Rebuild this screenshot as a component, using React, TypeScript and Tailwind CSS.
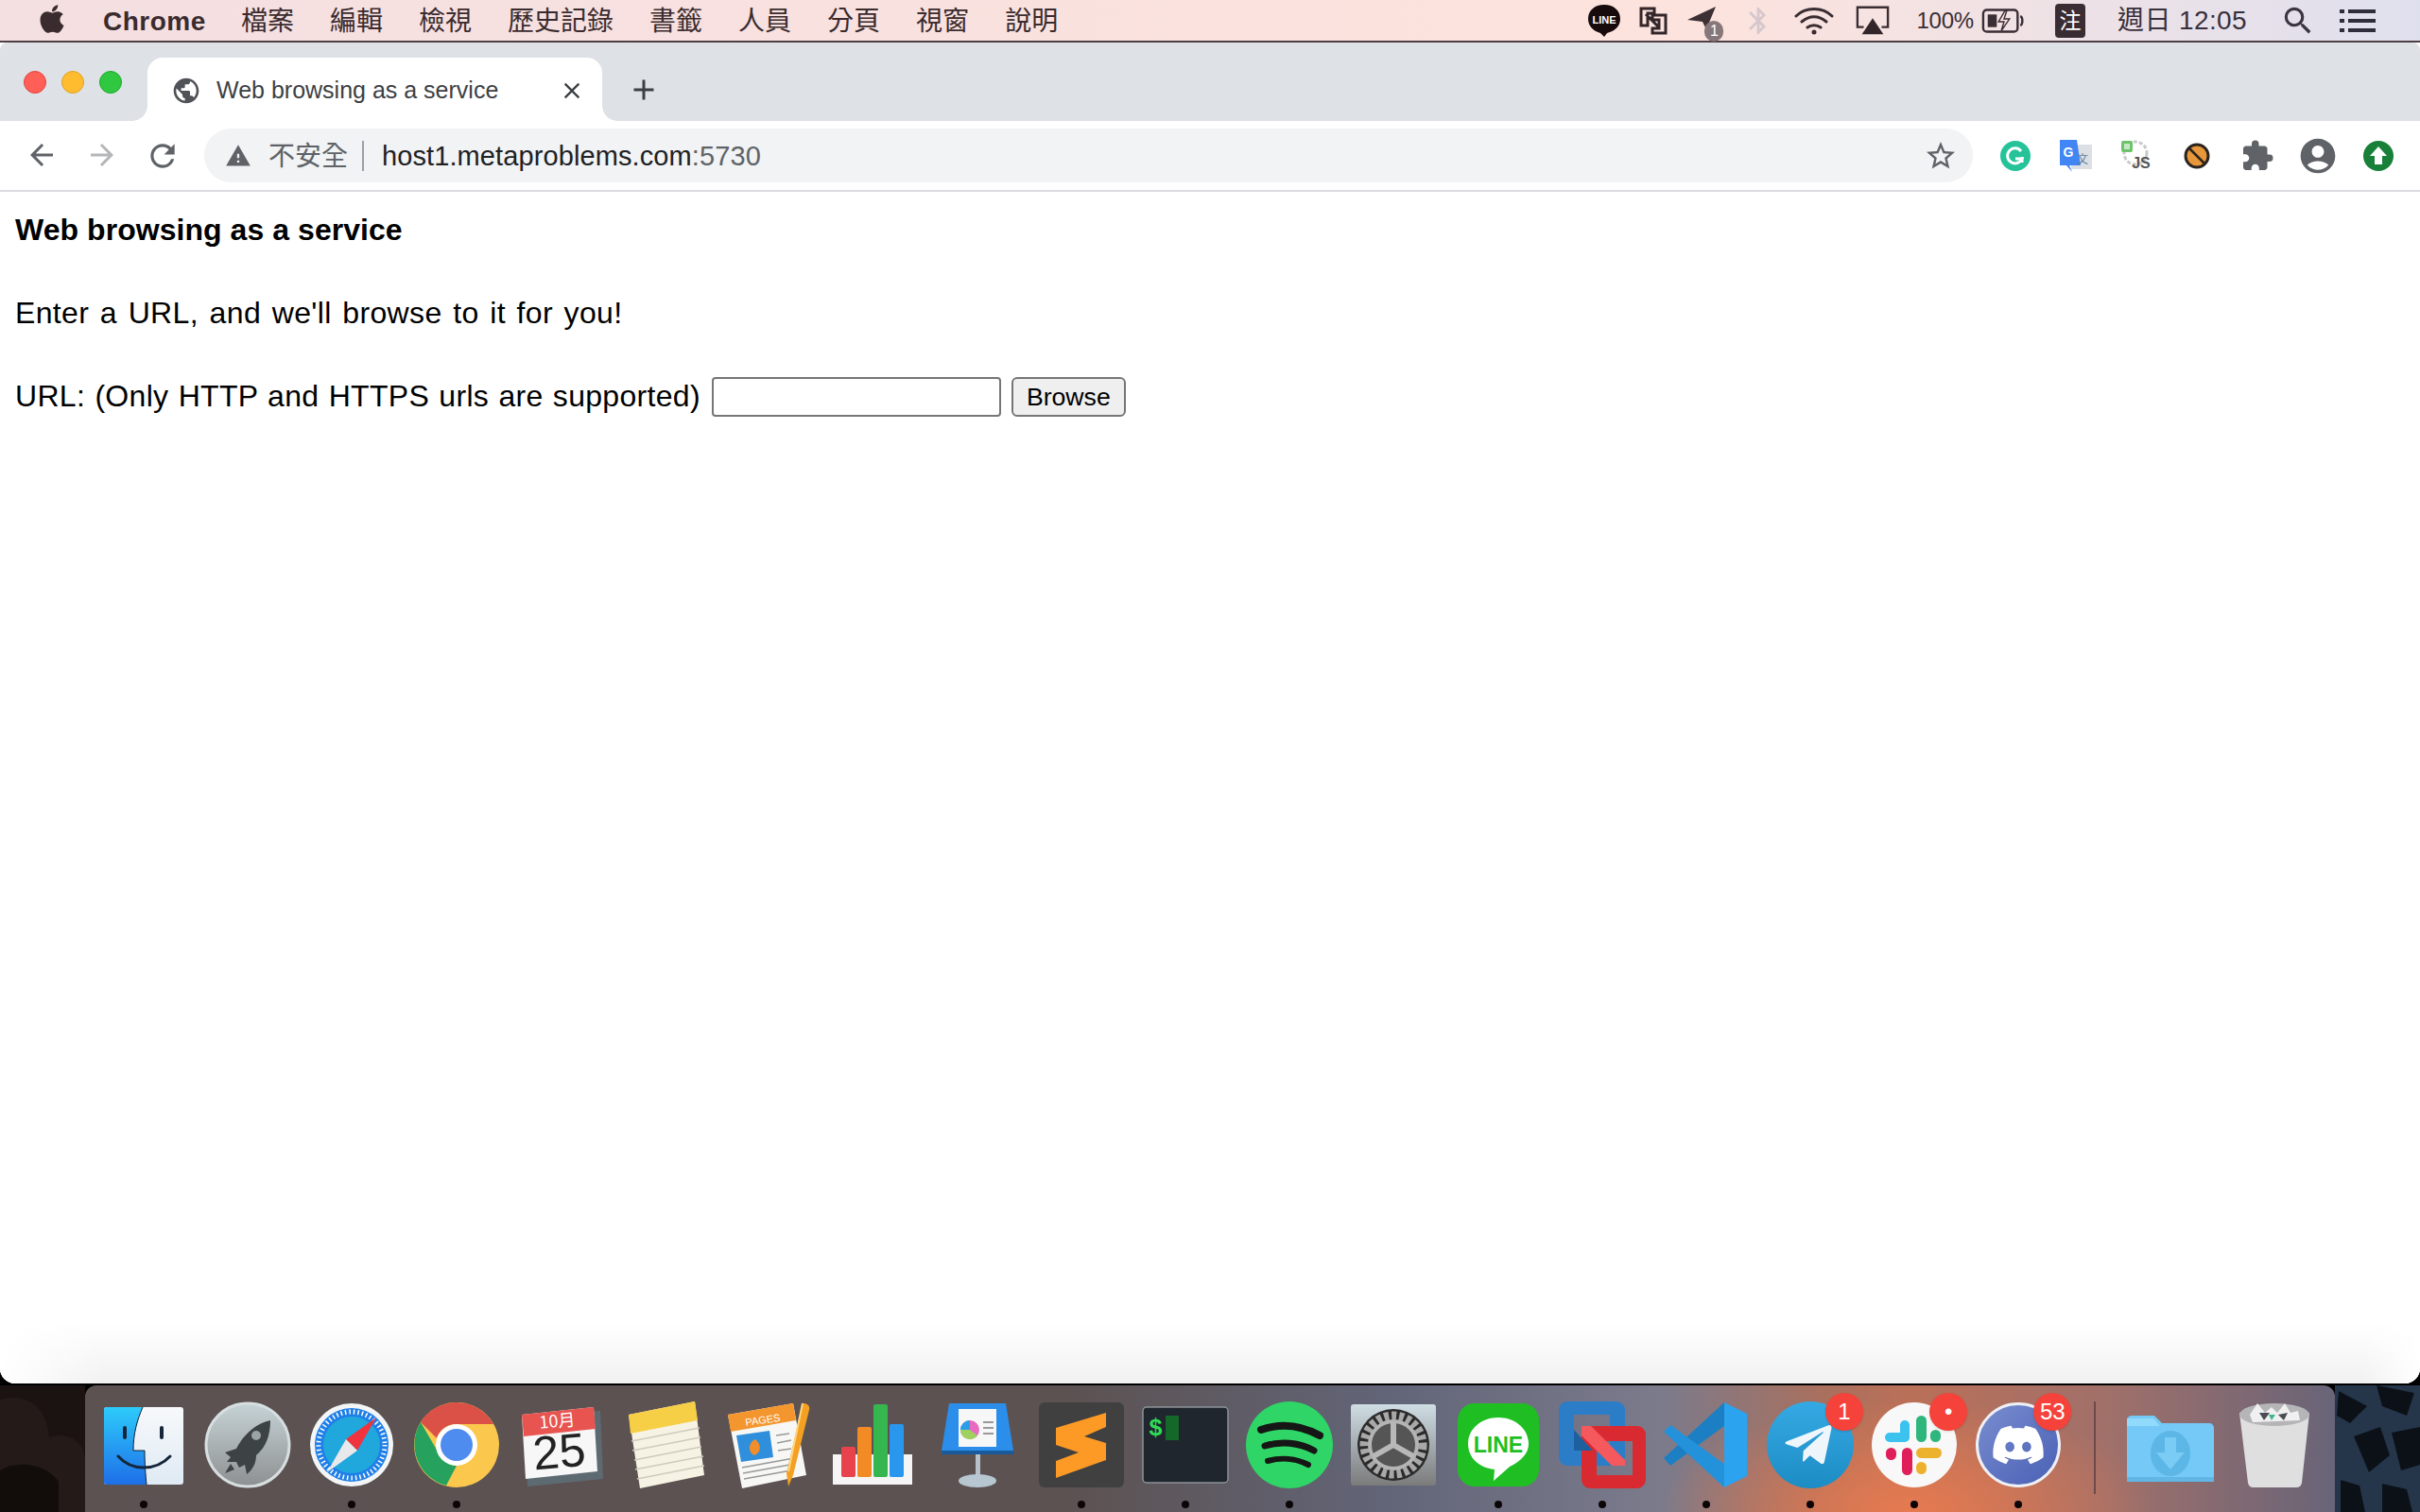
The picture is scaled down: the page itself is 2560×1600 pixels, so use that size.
import React from "react";
import { FaApple, FaDiscord, FaTelegramPlane } from "react-icons/fa";
import { MdAdd, MdArrowBack, MdArrowForward, MdAccountCircle, MdBluetooth, MdClose, MdExtension, MdPublic, MdRefresh, MdStarBorder, MdWarning, MdSearch } from "react-icons/md";

const ui = "font-['Liberation_Sans','Noto_Sans_CJK_TC',sans-serif]";

const menus = ["檔案", "編輯", "檢視", "歷史記錄", "書籤", "人員", "分頁", "視窗", "說明"];

function MenuBar() {
  return (
    <div className={`${ui} h-[45px] shrink-0 flex items-center border-b-2 border-[#4d3f44] bg-gradient-to-r from-[#f4dfe1] via-[#fde3dd] via-70% to-[#dfe0ee] text-[#3a2b2e]`}>
      <FaApple className="ml-[39px] mb-[3px] w-[32px] h-[34px]" />
      <span className="ml-[38px] pt-[2px] text-[28px] font-bold w-[146px] tracking-[0.5px]">Chrome</span>
      <div className="flex gap-[38px] pt-[2px] text-[28px] leading-none">
        {menus.map((m) => (
          <span key={m}>{m}</span>
        ))}
      </div>
      <div className="ml-auto flex items-center pt-[1px]">
        <svg viewBox="0 0 36 36" className="w-[36px] h-[36px] mr-[19px]"><path d="M18 1C8 1 1 7 1 16c0 8 6 13 13 15l4 4 3-4c8-2 14-7 14-15C35 7 28 1 18 1z" fill="#170b0e" /><text x="18" y="21" textAnchor="middle" fontSize="11" fontWeight="700" fill="#fff" fontFamily="Liberation Sans">LINE</text></svg>
        <svg viewBox="0 0 30 30" className="w-[30px] h-[30px] mr-[19px]" fill="none" stroke="#33262a" strokeWidth="3"><path d="M2 2h14v5h-7v13H2zM14 9h14v19H14v-5h7V14h-7zM7 8l14 14" /></svg>
        <div className="relative w-[40px] h-[34px] mr-[20px]">
          <svg viewBox="0 0 34 30" className="w-[34px] h-[30px]"><path d="M2 16L32 2 22 26 18 18z" fill="#3d3034" /></svg>
          <span className="absolute right-0 bottom-[-5px] w-[20px] h-[22px] rounded-full bg-[#85777a] text-white text-[16px] leading-[22px] text-center">1</span>
        </div>
        <MdBluetooth className="w-[34px] h-[36px] text-[#d5c8cc] mr-[21px]" />
        <svg viewBox="0 0 42 32" className="w-[42px] h-[32px] mr-[23px]" fill="none" stroke="#3a2d32" strokeWidth="3" strokeLinecap="round"><path d="M2 11C12 1 30 1 40 11M8 17c8-7 18-7 26 0M14 23c4-3 10-3 14 0" /><circle cx="21" cy="28" r="2.5" fill="#3a2d32" stroke="none" /></svg>
        <svg viewBox="0 0 38 34" className="w-[36px] h-[34px] mr-[28px]" fill="none"><path d="M9 24H2V2h34v22h-7" stroke="#3a2d32" strokeWidth="2.5" /><path d="M19 14l12 18H7z" fill="#33262a" /></svg>
        <span className="text-[24px] mr-[8px] text-[#3a2e35] tracking-[-0.2px]">100%</span>
        <svg viewBox="0 0 48 28" className="w-[46px] h-[28px] mr-[32px]" fill="none" stroke="#3a2e35" strokeWidth="2.5"><rect x="2" y="2" width="38" height="24" rx="4" /><path d="M43 9c3 1 3 9 0 10" /><path d="M7 7h10v14H7z" fill="#3a2e35" stroke="none" /><path d="M26 3l-7 12h6l-3 10 9-13h-6l3-9z" fill="#f8e0e0" stroke="#3a2e35" strokeWidth="1.5" /></svg>
        <span className="w-[32px] h-[36px] rounded-[4px] bg-[#3a2c33] text-white text-[23px] leading-[36px] text-center mr-[34px]">注</span>
        <span className="text-[28px] w-[136px] mr-[36px] text-[#38303c] whitespace-nowrap tracking-[0.4px]">週日 12:05</span>
        <MdSearch className="w-[38px] h-[38px] text-[#3a3440] mr-[25px]" />
        <svg viewBox="0 0 38 24" className="w-[38px] h-[24px] mr-[47px]" fill="#2f2c3c"><rect x="0" y="0" width="5" height="4" /><rect x="9" y="0" width="29" height="4" /><rect x="0" y="10" width="5" height="4" /><rect x="9" y="10" width="29" height="4" /><rect x="0" y="20" width="5" height="4" /><rect x="9" y="20" width="29" height="4" /></svg>
      </div>
    </div>
  );
}

function TabStrip() {
  return (
    <div className={`${ui} h-[83px] shrink-0 flex items-end bg-[#dee1e6] rounded-t-[8px]`}>
      <div className="self-center flex gap-[16px] ml-[25px] mr-[27px] mt-0">
        <span className="w-[24px] h-[24px] rounded-full bg-[#ff5f57] border border-[#e0443e]" />
        <span className="w-[24px] h-[24px] rounded-full bg-[#febc2e] border border-[#dea123]" />
        <span className="w-[24px] h-[24px] rounded-full bg-[#2fc840] border border-[#1aab29]" />
      </div>
      <div className="relative w-[481px] h-[67px] bg-white rounded-t-[16px] flex items-center pt-[2px]">
        <span className="absolute left-[-16px] bottom-0 w-[16px] h-[16px] bg-[radial-gradient(circle_at_0_0,transparent_15.5px,white_16px)]" />
        <span className="absolute right-[-16px] bottom-0 w-[16px] h-[16px] bg-[radial-gradient(circle_at_100%_0,transparent_15.5px,white_16px)]" />
        <MdPublic className="ml-[25px] w-[32px] h-[32px] text-[#4f5257]" />
        <span className="ml-[16px] text-[25px] text-[#3c4043] whitespace-nowrap">Web browsing as a service</span>
        <MdClose className="ml-auto mr-[18px] w-[28px] h-[28px] text-[#3c4043]" />
      </div>
      <MdAdd className="self-end mb-[15px] ml-[26px] w-[36px] h-[36px] text-[#3c4043]" />
    </div>
  );
}

function Ext({ children }: { children: React.ReactNode }) {
  return <div className="w-[64px] flex justify-center items-center">{children}</div>;
}

function Toolbar() {
  return (
    <div className={`${ui} h-[75px] shrink-0 flex items-center bg-white border-b-2 border-[#dadce0]`}>
      <div className="flex w-[216px] pl-[12px] text-[#5f6368]">
        <div className="w-[64px] flex justify-center"><MdArrowBack className="w-[36px] h-[36px]" /></div>
        <div className="w-[64px] flex justify-center"><MdArrowForward className="w-[36px] h-[36px] text-[#b4b6b9]" /></div>
        <div className="w-[64px] flex justify-center"><MdRefresh className="w-[38px] h-[38px]" /></div>
      </div>
      <div className="w-[1871px] h-[57px] rounded-full bg-[#f1f3f4] flex items-center text-[28px]">
        <MdWarning className="ml-[22px] w-[28px] h-[28px] text-[#5f6368]" />
        <span className="ml-[18px] pt-[3px] text-[#5f6368]">不安全</span>
        <span className="ml-[15px] w-[2px] h-[32px] bg-[#9aa0a6]" />
        <span className="ml-[19px] pt-[3px] text-[29px] tracking-[0.1px] text-[#202124]">host1.metaproblems.com<span className="text-[#5f6368]">:5730</span></span>
        <MdStarBorder className="ml-auto mr-[16px] w-[36px] h-[36px] text-[#5f6368]" />
      </div>
      <div className="ml-[13px] flex">
        <Ext>
          <svg viewBox="0 0 32 32" className="w-[32px] h-[32px]"><circle cx="16" cy="16" r="16" fill="#26c29a" /><path d="M22 11a8 8 0 1 0 1 8h-7" fill="none" stroke="#fff" strokeWidth="3" /><path d="M23 17v6" stroke="#fff" strokeWidth="3" /></svg>
        </Ext>
        <Ext>
          <svg viewBox="0 0 34 34" className="w-[34px] h-[34px]"><rect x="12" y="5" width="22" height="26" fill="#dcdfe3" /><path d="M0 0h18l4 27H10l3 7-6-7H0z" fill="#4285f4" /><text x="9" y="18" textAnchor="middle" fontSize="14" fontWeight="700" fill="#fff" fontFamily="Liberation Sans">G</text><text x="24" y="25" textAnchor="middle" fontSize="12" fill="#5f7f9f" fontFamily="Noto Sans CJK TC">文</text></svg>
        </Ext>
        <Ext>
          <svg viewBox="0 0 34 34" className="w-[34px] h-[34px]"><circle cx="16" cy="14" r="12" fill="none" stroke="#c9c9c9" strokeWidth="3" strokeDasharray="4 2" /><rect x="1" y="1" width="12" height="12" rx="2" fill="#6cc36a" /><rect x="4" y="4" width="6" height="6" fill="#c6e9c5" /><text x="22" y="30" textAnchor="middle" fontSize="16" fontWeight="700" fill="#555" fontFamily="Liberation Sans">JS</text></svg>
        </Ext>
        <Ext>
          <svg viewBox="0 0 28 28" className="w-[28px] h-[28px]"><circle cx="14" cy="14" r="12" fill="#e8963a" stroke="#2b2420" strokeWidth="3" /><path d="M5 5l18 18" stroke="#2b2420" strokeWidth="2.5" /></svg>
        </Ext>
        <Ext><MdExtension className="w-[36px] h-[36px] text-[#5f6368]" /></Ext>
        <Ext><MdAccountCircle className="w-[44px] h-[44px] text-[#5f6368]" /></Ext>
        <Ext>
          <svg viewBox="0 0 32 32" className="w-[32px] h-[32px]"><circle cx="16" cy="16" r="16" fill="#188038" /><path d="M16 6l9 10h-5v9h-8v-9H7z" fill="#fff" /></svg>
        </Ext>
      </div>
    </div>
  );
}

function Page() {
  return (
    <div className="flex-1 min-h-0 flex flex-col bg-white font-['Liberation_Sans',sans-serif] text-black text-[32px] leading-[44px]">
      <div className="pl-[16px] pt-[18px]">
        <p className="font-bold h-[88px] tracking-[0.05px]">Web browsing as a service</p>
        <p className="h-[88px] tracking-[0.35px] [word-spacing:2.4px]">Enter a URL, and we'll browse to it for you!</p>
        <div className="flex items-center h-[44px]">
          <span className="tracking-[0.3px] [word-spacing:1.1px]">URL: (Only HTTP and HTTPS urls are supported)</span>
          <input className="ml-[12px] mt-[2px] w-[306px] h-[42px] border-2 border-[#767676] rounded-[4px] bg-white" />
          <button className="ml-[11px] mt-[2px] w-[121px] h-[42px] border-2 border-[#767676] rounded-[6px] bg-[#efefef] text-[26.67px] leading-none">Browse</button>
        </div>
      </div>
      <div className="mt-auto h-[64px] bg-gradient-to-b from-white to-[#f1f1f1] rounded-b-[16px] overflow-hidden flex justify-between">
        <div className="w-[110px] bg-gradient-to-r from-white to-transparent" />
        <div className="w-[60px] bg-gradient-to-l from-white to-transparent" />
      </div>
    </div>
  );
}

function DockItem({ dot, badge, children }: { dot?: boolean; badge?: string; children: React.ReactNode }) {
  return (
    <div className="relative w-[110.2px] shrink-0 flex flex-col items-center">
      <div className="w-[92px] h-[92px] flex items-center justify-center">{children}</div>
      {badge && (
        <span className="absolute left-[71px] top-[-9px] w-[40px] h-[40px] rounded-full bg-[#f5423a] text-white text-center text-[24px] leading-[40px] shadow-sm">{badge}</span>
      )}
      <span className={`mt-[13px] w-[8px] h-[8px] rounded-full ${dot ? "bg-[#0b0508]" : ""}`} />
    </div>
  );
}

const S = "w-[92px] h-[92px]";

function Dock() {
  return (
    <div className={`${ui} relative w-[2380px] h-[134px] rounded-t-[12px] overflow-hidden flex pl-[7px] pt-[17px] bg-[radial-gradient(ellipse_260px_120px_at_81%_100%,#e67a50,transparent),linear-gradient(90deg,#5c5252_0%,#5c5252_44%,#626578_58%,#7b7b8c_70%,#a8705f_77%,#ba7058_81%,#a0706a_90%,#686478_100%)]`}>
      <DockItem dot>
        <svg viewBox="0 0 92 92" className={S}>
          <defs>
            <linearGradient id="fb" x1="0" y1="0" x2="0" y2="1"><stop offset="0" stopColor="#2dcbfb" /><stop offset="1" stopColor="#1e6fe8" /></linearGradient>
            <linearGradient id="fw" x1="0" y1="0" x2="0" y2="1"><stop offset="0" stopColor="#f7f9fb" /><stop offset="1" stopColor="#dfeaf4" /></linearGradient>
          </defs>
          <rect x="4" y="6" width="84" height="82" rx="3" fill="url(#fw)" />
          <path d="M7 6h38c-6 14-10 28-10 46h12c0 14 1 26 2 36H7a3 3 0 0 1-3-3V9a3 3 0 0 1 3-3z" fill="url(#fb)" />
          <path d="M45 6c-6 14-10 28-10 46h12c0 14 1 26 2 36" fill="none" stroke="#123" strokeWidth="1" />
          <rect x="24" y="26" width="4" height="14" rx="2" fill="#16263a" /><rect x="63" y="26" width="4" height="14" rx="2" fill="#16263a" />
          <path d="M19 58c14 16 40 16 55 0" fill="none" stroke="#16263a" strokeWidth="3" strokeLinecap="round" />
        </svg>
      </DockItem>
      <DockItem>
        <svg viewBox="0 0 92 92" className={S}>
          <defs><linearGradient id="lp" x1="0" y1="0" x2="0" y2="1"><stop offset="0" stopColor="#c6d3d6" /><stop offset="1" stopColor="#8e9091" /></linearGradient></defs>
          <circle cx="46" cy="46" r="44" fill="url(#lp)" stroke="#d6dedf" strokeWidth="3" />
          <path d="M70 20C52 24 40 38 34 50l-12 4 6 5-4 5 10 0 3 6 6-3 2 10c8-6 10-14 10-20 12-10 15-24 15-37z" fill="#3d4244" />
          <circle cx="55" cy="36" r="5" fill="#9aa3a5" />
          <path d="M28 66l-6 10 10-4z" fill="#3d4244" />
        </svg>
      </DockItem>
      <DockItem dot>
        <svg viewBox="0 0 92 92" className={S}>
          <circle cx="46" cy="46" r="44" fill="#f3f5f6" />
          <circle cx="46" cy="46" r="39" fill="#1f7fe8" />
          <circle cx="46" cy="46" r="30" fill="#20a7dc" />
          <circle cx="46" cy="46" r="35" fill="none" stroke="#fff" strokeWidth="5" strokeDasharray="1.5 3" />
          <path d="M72 17L40 40l12 12z" fill="#f0333c" />
          <path d="M20 75l20-35 12 12z" fill="#e9e9ec" />
        </svg>
      </DockItem>
      <DockItem dot>
        <svg viewBox="0 0 92 92" className={S}>
          <circle cx="46" cy="46" r="45" fill="#fbc84d" />
          <path d="M46 1a45 45 0 0 1 39 23H46a22 22 0 0 0-21 15L8 22A45 45 0 0 1 46 1z" fill="#dc5147" />
          <path d="M8 22l18 31a22 22 0 0 0 20 15L35 89A45 45 0 0 1 8 22z" fill="#26a25e" />
          <circle cx="46" cy="46" r="22" fill="#fff" />
          <circle cx="46" cy="46" r="17" fill="#4e8cf0" />
        </svg>
      </DockItem>
      <DockItem>
        <svg viewBox="0 0 92 92" className={S}>
          <path d="M8 18l80-8 3 72-80 8z" fill="#5d6a72" />
          <path d="M5 14l76-8 4 68-76 8z" fill="#f7f7f7" />
          <path d="M5 14l76-8 2 23-76 8z" fill="#e85450" />
          <text x="43" y="27" textAnchor="middle" fontSize="18" fill="#fff" transform="rotate(-5 43 27)" fontFamily="Noto Sans CJK TC">10月</text>
          <text x="46" y="70" textAnchor="middle" fontSize="50" fill="#222" transform="rotate(-5 46 70)" fontFamily="Liberation Sans">25</text>
        </svg>
      </DockItem>
      <DockItem>
        <svg viewBox="0 0 92 92" className={S}>
          <path d="M8 14L78 0l10 78-68 14z" fill="#f7f3e4" />
          <path d="M8 14L78 0l3 20L10 34z" fill="#f7cf47" />
          <path d="M11 42l72-14M12 52l72-14M14 62l71-14M15 72l72-14M17 82l71-14" stroke="#cfcbbb" strokeWidth="1.5" />
        </svg>
      </DockItem>
      <DockItem>
        <svg viewBox="0 0 92 92" className={S}>
          <path d="M3 14L72 2l14 76-68 14z" fill="#f7f7f5" />
          <path d="M3 14L72 2l3 18L6 32z" fill="#f4962e" />
          <text x="22" y="26" fontSize="11" fill="#fff" transform="rotate(-8 22 26)" fontFamily="Liberation Sans">PAGES</text>
          <path d="M12 36l35-5 4 28-34 5z" fill="#2f8fdc" />
          <path d="M32 40c-8 4-8 14-1 17 7-3 8-11 1-17z" fill="#f28e2a" />
          <path d="M18 70l55-10M19 76l55-10M20 82l50-9M54 36l14-2M55 44l15-3M56 52l14-2" stroke="#999" strokeWidth="1.5" />
          <path d="M82 2c6 0 8 3 7 7L72 78l-5 12-2-14z" fill="#f3a023" />
          <path d="M82 2l-15 72" stroke="#ffd680" strokeWidth="2" />
        </svg>
      </DockItem>
      <DockItem>
        <svg viewBox="0 0 92 92" className={S}>
          <rect x="4" y="56" width="84" height="32" fill="#f5f5f5" />
          <rect x="13" y="48" width="15" height="32" rx="2" fill="#e8434c" />
          <rect x="30" y="27" width="15" height="53" rx="2" fill="#f28b26" />
          <rect x="47" y="3" width="15" height="77" rx="2" fill="#35b64f" />
          <rect x="64" y="24" width="15" height="56" rx="2" fill="#2a97ee" />
        </svg>
      </DockItem>
      <DockItem>
        <svg viewBox="0 0 92 92" className={S}>
          <path d="M16 2h60l8 50H8z" fill="#2a8eea" />
          <rect x="8" y="52" width="76" height="4" fill="#185a9c" />
          <rect x="26" y="8" width="40" height="40" fill="#f7f7f7" />
          <circle cx="38" cy="30" r="10" fill="#e86bc0" /><path d="M38 30V20a10 10 0 0 0-10 10z" fill="#2a9fe8" /><path d="M38 30H28a10 10 0 0 0 18 6z" fill="#a0d060" />
          <path d="M52 22h11M52 28h11M52 34h11" stroke="#999" strokeWidth="2" />
          <rect x="44" y="56" width="5" height="26" fill="#b5c0c8" />
          <ellipse cx="46" cy="84" rx="20" ry="7" fill="#b7c7d2" />
        </svg>
      </DockItem>
      <DockItem dot>
        <svg viewBox="0 0 92 92" className={S}>
          <rect x="1" y="1" width="90" height="90" rx="6" fill="#404040" />
          <path d="M72 12v15L49 37l23 7v18L19 81V63l24-9-24-8V28z" fill="#fd9a25" />
        </svg>
      </DockItem>
      <DockItem dot>
        <svg viewBox="0 0 92 92" className={S}>
          <rect x="1" y="6" width="90" height="80" rx="4" fill="#1f262e" stroke="#8d9399" strokeWidth="1.5" />
          <text x="7" y="36" fontSize="25" fontWeight="700" fill="#2fdc55" fontFamily="Liberation Mono">$</text>
          <rect x="25" y="15" width="14" height="26" fill="#14682a" />
        </svg>
      </DockItem>
      <DockItem dot>
        <svg viewBox="0 0 92 92" className={S}>
          <circle cx="46" cy="46" r="46" fill="#2fd566" />
          <path d="M16 30c20-7 42-5 62 6" fill="none" stroke="#161616" strokeWidth="8" strokeLinecap="round" />
          <path d="M20 47c16-5 36-4 52 5" fill="none" stroke="#161616" strokeWidth="7" strokeLinecap="round" />
          <path d="M23 63c14-4 30-3 43 4" fill="none" stroke="#161616" strokeWidth="6" strokeLinecap="round" />
        </svg>
      </DockItem>
      <DockItem>
        <svg viewBox="0 0 92 92" className={S}>
          <defs><linearGradient id="sp" x1="0" y1="0" x2="0" y2="1"><stop offset="0" stopColor="#cfdde4" /><stop offset="1" stopColor="#7b7b7b" /></linearGradient></defs>
          <rect x="1" y="3" width="90" height="86" rx="3" fill="url(#sp)" />
          <circle cx="46" cy="46" r="38" fill="#2b2b2b" />
          <circle cx="46" cy="46" r="31" fill="none" stroke="#a8a8a8" strokeWidth="9" strokeDasharray="5 3" />
          <circle cx="46" cy="46" r="25" fill="#555" stroke="#b4b4b4" strokeWidth="4" />
          <path d="M46 46V22M46 46L25 58M46 46l21 12" stroke="#b8b8b8" strokeWidth="6" />
        </svg>
      </DockItem>
      <DockItem dot>
        <svg viewBox="0 0 92 92" className={S}>
          <rect x="3" y="2" width="86" height="88" rx="18" fill="#1fbf24" />
          <path d="M46 17c-18 0-32 12-32 28 0 14 11 25 28 27l-1 12 17-15c12-6 20-14 20-24 0-16-14-28-32-28z" fill="#fff" />
          <text x="46" y="54" textAnchor="middle" fontSize="23" fontWeight="700" fill="#1fbf24" fontFamily="Liberation Sans">LINE</text>
        </svg>
      </DockItem>
      <DockItem dot>
        <svg viewBox="0 0 92 92" className={S}>
          <path fillRule="evenodd" d="M9 0h52a9 9 0 0 1 9 9v50a9 9 0 0 1-9 9H9a9 9 0 0 1-9-9V9a9 9 0 0 1 9-9zM16 14v38h38V14z" fill="#2c7dc8" />
          <path fillRule="evenodd" d="M33 26h50a9 9 0 0 1 9 9v48a9 9 0 0 1-9 9H33a9 9 0 0 1-9-9V35a9 9 0 0 1 9-9zM40 42v36h38V42z" fill="#d92a31" />
          <path d="M24 26h10l36 36v6H56L24 36z" fill="#f5585d" />
          <path d="M16 30v22h20z" fill="#1e5f9e" />
        </svg>
      </DockItem>
      <DockItem dot>
        <svg viewBox="0 0 92 92" className={S}>
          <path d="M65 1v25L8 68l-7-8z" fill="#1c7fc4" />
          <path d="M8 25l57 41v25L1 32z" fill="#2392da" />
          <path d="M65 1l24 12v66L65 91z" fill="#2ba3ee" />
        </svg>
      </DockItem>
      <DockItem dot badge="1">
        <span className="w-[92px] h-[92px] rounded-full bg-gradient-to-b from-[#35a9e4] to-[#1c8cc4] flex items-center justify-center">
          <FaTelegramPlane className="w-[56px] h-[56px] text-[#eef6fb] mr-[4px]" />
        </span>
      </DockItem>
      <DockItem dot badge="•">
        <svg viewBox="0 0 92 92" className={S}>
          <circle cx="46" cy="46" r="45" fill="#f8f8f8" />
          <rect x="31" y="20" width="10" height="22" rx="5" fill="#3cc2ee" /><rect x="15" y="33" width="26" height="10" rx="5" fill="#3cc2ee" />
          <rect x="48" y="15" width="11" height="28" rx="5.5" fill="#2eb67d" /><rect x="63" y="30" width="11" height="13" rx="5.5" fill="#2eb67d" />
          <rect x="48" y="49" width="27" height="11" rx="5.5" fill="#ecb22e" /><rect x="48" y="64" width="11" height="13" rx="5.5" fill="#ecb22e" />
          <rect x="33" y="49" width="11" height="29" rx="5.5" fill="#e01e5a" /><rect x="16" y="49" width="11" height="13" rx="5.5" fill="#e01e5a" />
        </svg>
      </DockItem>
      <DockItem dot badge="53">
        <span className="w-[90px] h-[90px] rounded-full border-[3px] border-[#eef0f5] bg-gradient-to-br from-[#7a8dd0] to-[#4a60b4] flex items-center justify-center">
          <FaDiscord className="w-[58px] h-[58px] text-white" />
        </span>
      </DockItem>
      <div className="w-[50px] shrink-0 flex justify-center">
        <span className="w-[2px] h-[98px] bg-[#6e4a4a]" />
      </div>
      <DockItem>
        <svg viewBox="0 0 92 92" className={S}>
          <path d="M0 20a5 5 0 0 1 5-5h24l8 8h50a5 5 0 0 1 5 5v52a4 4 0 0 1-4 4H4a4 4 0 0 1-4-4z" fill="#74c9f6" />
          <path d="M0 18h28l7 8H0z" fill="#92dafb" />
          <rect x="0" y="80" width="92" height="5" fill="#60b7e6" />
          <ellipse cx="46" cy="55" rx="21" ry="24" fill="#5cb6e6" />
          <path d="M40 38h12v16h9L46 72 31 54h9z" fill="#7accf5" />
        </svg>
      </DockItem>
      <DockItem>
        <svg viewBox="0 0 92 92" className={S}>
          <path d="M9 12h74l-8 74a6 6 0 0 1-6 5H24a6 6 0 0 1-6-5z" fill="#dfdfe0" />
          <ellipse cx="46" cy="14" rx="37" ry="12" fill="#b5b5b8" />
          <path d="M20 14l8-12 8 10 7-6 6 6 8-10 6 10 8-2 2 10-50 2z" fill="#f0f0f0" />
          <path d="M30 12l5 8 6-8zM50 14l6 6 4-8z" fill="#4b4b55" />
          <path d="M40 14l3 6 4-6z" fill="#3bb78f" />
        </svg>
      </DockItem>
    </div>
  );
}

export default function App() {
  return (
    <div className="w-[2560px] h-[1600px] overflow-hidden flex flex-col bg-black">
      <MenuBar />
      <div className="flex-1 min-h-0 flex flex-col rounded-b-[16px] overflow-hidden bg-white">
        <TabStrip />
        <Toolbar />
        <Page />
      </div>
      <div className="h-[136px] shrink-0 pt-[2px] flex bg-black">
        <div className="w-[90px] bg-[#1a1312] overflow-hidden">
          <svg viewBox="0 0 90 134" className="w-[90px] h-[134px]"><path d="M0 15c30-8 50 10 52 40 18-6 34 2 38 20v59H0z" fill="#241a17" /><path d="M0 90c20-12 50-6 62 12v32H0z" fill="#120c0b" /></svg>
        </div>
        <Dock />
        <div className="w-[90px] bg-[#25364a] overflow-hidden">
          <svg viewBox="0 0 90 134" className="w-[90px] h-[134px]" fill="#0c1118"><path d="M4 6l30 16-18 18-14-8zM44 0l40 8-8 24-26-10zM20 54l28-10 10 30-22 18zM60 50l30-6v40l-20 6zM6 100l20 6 6 28H6zM50 104l26 6 6 24H50z" /></svg>
        </div>
      </div>
    </div>
  );
}
